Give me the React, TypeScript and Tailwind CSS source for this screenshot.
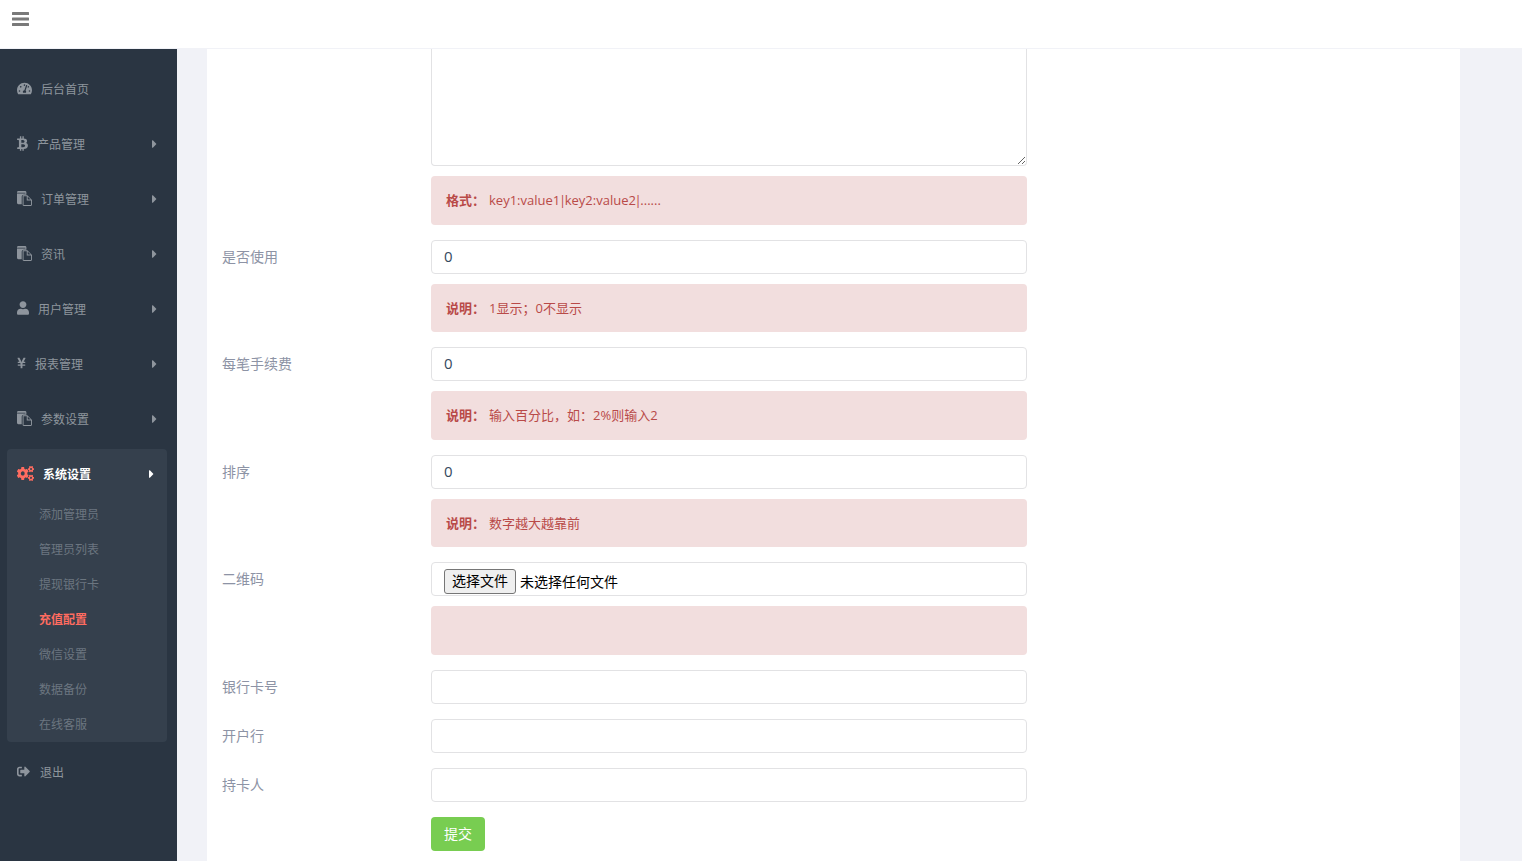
import {
  FaBtc,
  FaCaretRight,
  FaCogs,
  FaSignOutAlt,
  FaTachometerAlt,
  FaUser,
  FaYenSign,
} from 'react-icons/fa';
import type {ReactNode} from 'react';

function BarsIcon() {
  return (
    <svg viewBox="0 0 17 14" className="w-[17px] h-[14px] text-[#797979]" fill="currentColor">
      <rect x="0" y="0" width="17" height="3" rx="0.5" />
      <rect x="0" y="5.5" width="17" height="3" rx="0.5" />
      <rect x="0" y="11" width="17" height="3" rx="0.5" />
    </svg>
  );
}

function FilesIcon() {
  return (
    <svg viewBox="0 0 16 16" className="w-[15px] h-[15px]" fill="currentColor">
      <path d="M0 1.5C0 .7.6 0 1.4 0h7.2C9.4 0 10 .7 10 1.5V4H7.2C6 4 5 5 5 6.2V14H1.4C.6 14 0 13.4 0 12.5V2.6h9v-.8H0z" />
      <path
        fillRule="evenodd"
        d="M6.5 4.5H11l5 5v5.2c0 .7-.6 1.3-1.3 1.3H7.3c-.7 0-1.3-.6-1.3-1.3V5.5c0-.5.2-.8.5-1zM7 5.5V15h8v-5h-4.6V5.5zm4.4.4v3.1h3.1z"
      />
    </svg>
  );
}

function Caret() {
  return <FaCaretRight className="w-[5px] h-[14px] -mt-[1px]" />;
}

type NavItem = {
  label: string;
  icon: ReactNode;
  arrow?: boolean;
};

const navTop: NavItem[] = [
  {label: '后台首页', icon: <FaTachometerAlt className="w-[15px] h-[15px]" />},
  {label: '产品管理', icon: <FaBtc className="w-[11px] h-[15px]" />, arrow: true},
  {label: '订单管理', icon: <FilesIcon />, arrow: true},
  {label: '资讯', icon: <FilesIcon />, arrow: true},
  {label: '用户管理', icon: <FaUser className="w-3 h-[14px]" />, arrow: true},
  {label: '报表管理', icon: <FaYenSign className="w-[9px] h-[14px]" />, arrow: true},
  {label: '参数设置', icon: <FilesIcon />, arrow: true},
];

const subMenu = ['添加管理员', '管理员列表', '提现银行卡', '充值配置', '微信设置', '数据备份', '在线客服'];

function NavRow({label, icon, arrow}: NavItem) {
  return (
    <a className="flex items-center h-[55px] pl-[17px] pr-[20px] text-[12px] text-[#8e959d]">
      <span className="-mt-[3px]">{icon}</span>
      <span className="ml-[9px] flex-1">{label}</span>
      {arrow && <Caret />}
    </a>
  );
}

function Alert({title, children}: {title?: string; children?: ReactNode}) {
  return (
    <div className="mt-[10px] mb-[15px] p-[15px] min-h-[48.57px] rounded-[4px] bg-[#f2dede] text-[13px] leading-[18.57px] text-[#b94a48]">
      {title && <b className="mr-[4px]">{title}</b>}
      {children}
      {!title && <span>&nbsp;</span>}
    </div>
  );
}

function Pipe() {
  return <span className="-mx-[1.35px]">|</span>;
}

function Row({label, children}: {label?: string; children: ReactNode}) {
  return (
    <div className="grid grid-cols-[209px_596px]">
      <label className="pt-[7px] text-[14px] leading-[20px] text-[#8d93a5]">{label}</label>
      <div>{children}</div>
    </div>
  );
}

function TextInput({value, mb}: {value?: string; mb?: boolean}) {
  return (
    <input
      readOnly
      value={value ?? ''}
      className={`block w-full h-[34px] px-3 pb-[2px] border border-[#e2e2e4] rounded-[4px] text-[15px] text-[#34495e] outline-none ${mb ? 'mb-[15px]' : ''}`}
    />
  );
}

export default function App() {
  return (
    <div className="h-screen overflow-hidden flex flex-col bg-[#f1f2f7] font-['Open_Sans','Noto_Sans_CJK_SC',sans-serif]">
      <header className="h-[49px] shrink-0 bg-white border-b border-[#f1f2f7] pl-3 pt-3">
        <BarsIcon />
      </header>

      <div className="flex flex-1 min-h-0">
        <aside className="w-[177px] shrink-0 bg-[#2a3542] pt-[13px]">
          {navTop.map(item => (
            <NavRow key={item.label} {...item} />
          ))}

          <div className="mt-[2px] mx-[7px] w-[160px] h-[293px] rounded-[4px] bg-[#35404d]">
            <a className="flex items-center h-[51px] pl-[10px] pr-[13px] text-[12px] font-bold text-white">
              <FaCogs className="w-[17px] h-[15px] text-[#ff6c60] -mt-[3px]" preserveAspectRatio="none" />
              <span className="ml-[9px] flex-1">系统设置</span>
              <Caret />
            </a>
            <ul>
              {subMenu.map(name => (
                <li
                  key={name}
                  className={`h-[35px] pl-[32px] text-[12px] leading-[30px] ${
                    name === '充值配置' ? 'text-[#ff6c60] font-bold' : 'text-[#6c7680]'
                  }`}
                >
                  {name}
                </li>
              ))}
            </ul>
          </div>

          <a className="flex items-center h-[55px] mt-[3px] pl-[17px] text-[12px] text-[#8e959d]">
            <FaSignOutAlt className="w-[13px] h-[13px] -mt-[3px]" />
            <span className="ml-[10px]">退出</span>
          </a>
        </aside>

        <main className="flex-1 min-w-0 pl-[30px] pr-[62px]">
          <div className="h-full bg-white pl-[15px]">
            <Row>
              <textarea
                readOnly
                className="block w-full h-[117px] border border-t-0 border-[#e2e2e4] rounded-b-[4px] outline-none"
              />
              <Alert title="格式：">
                key1:value1<Pipe />key2:value2<Pipe />......
              </Alert>
            </Row>
            <Row label="是否使用">
              <TextInput value="0" />
              <Alert title="说明：">1显示；0不显示</Alert>
            </Row>
            <Row label="每笔手续费">
              <TextInput value="0" />
              <Alert title="说明：">输入百分比，如：2%则输入2</Alert>
            </Row>
            <Row label="排序">
              <TextInput value="0" />
              <Alert title="说明：">数字越大越靠前</Alert>
            </Row>
            <Row label="二维码">
              <div className="flex items-center h-[34px] pl-3 pt-[4px] border border-[#e2e2e4] rounded-[4px] text-[14px] text-black">
                <button className="h-[25px] w-[72px] border border-[#767676] rounded-[3px] bg-[#efefef] text-[14px] leading-[20px]">
                  选择文件
                </button>
                <span className="ml-[4px]">未选择任何文件</span>
              </div>
              <Alert />
            </Row>
            <Row label="银行卡号">
              <TextInput mb />
            </Row>
            <Row label="开户行">
              <TextInput mb />
            </Row>
            <Row label="持卡人">
              <TextInput mb />
            </Row>
            <Row>
              <button className="h-[34px] w-[54px] rounded-[4px] bg-[#78cd51] text-[14px] text-white">
                提交
              </button>
            </Row>
          </div>
        </main>
      </div>
    </div>
  );
}
